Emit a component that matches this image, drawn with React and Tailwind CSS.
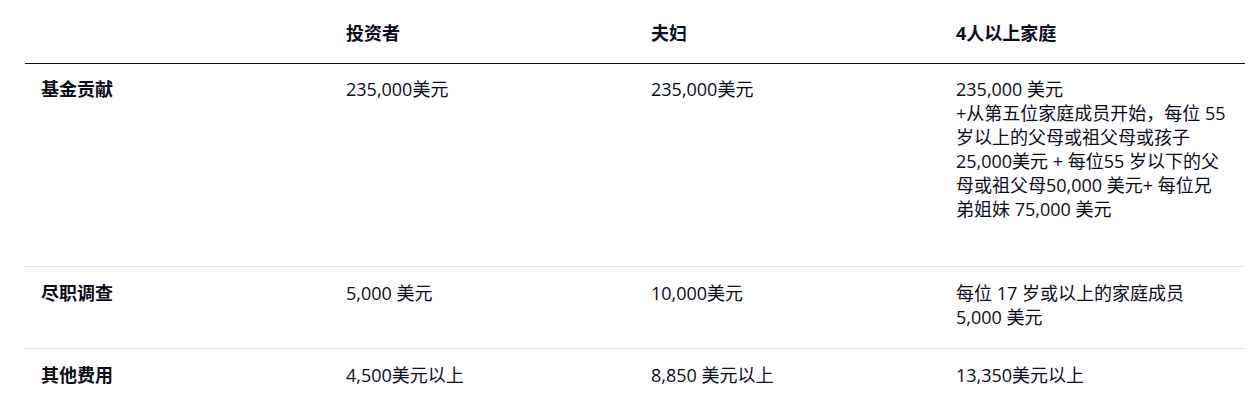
export default function App() {
  const font = { fontFamily: '"Open Sans", "Noto Sans CJK SC", sans-serif' };
  const cell = "px-4 whitespace-nowrap";
  return (
    <div className="w-[1248px] h-[408px] bg-white overflow-hidden text-[18px] leading-[24px] text-[#0b0c1a]" style={font}>
      <div className="ml-[25px] w-[1220px]">
        <div className="grid grid-cols-4 border-b border-[#0b0c1a] pt-[21px] pb-[18px] font-bold">
          <div className={cell}></div>
          <div className={cell}>投资者</div>
          <div className={cell}>夫妇</div>
          <div className={cell}>4人以上家庭</div>
        </div>
        <div className="grid grid-cols-4 border-b border-[#e4e5ea] pt-[13px] pb-[21px]">
          <div className={cell + " font-bold"}>基金贡献</div>
          <div className={cell}>235,000美元</div>
          <div className={cell}>235,000美元</div>
          <div className={cell}>
            235,000 美元<br />
            +从第五位家庭成员开始，每位 55<br />
            岁以上的父母或祖父母或孩子<br />
            25,000美元 + 每位55 岁以下的父<br />
            母或祖父母50,000 美元+ 每位兄<br />
            弟姐妹 75,000 美元<br />
            &nbsp;
          </div>
        </div>
        <div className="grid grid-cols-4 border-b border-[#e4e5ea] pt-[14px] pb-[19px]">
          <div className={cell + " font-bold"}>尽职调查</div>
          <div className={cell}>5,000 美元</div>
          <div className={cell}>10,000美元</div>
          <div className={cell}>
            每位 17 岁或以上的家庭成员<br />
            5,000 美元
          </div>
        </div>
        <div className="grid grid-cols-4 pt-[14px] pb-[19px]">
          <div className={cell + " font-bold"}>其他费用</div>
          <div className={cell}>4,500美元以上</div>
          <div className={cell}>8,850 美元以上</div>
          <div className={cell}>13,350美元以上</div>
        </div>
      </div>
    </div>
  );
}
